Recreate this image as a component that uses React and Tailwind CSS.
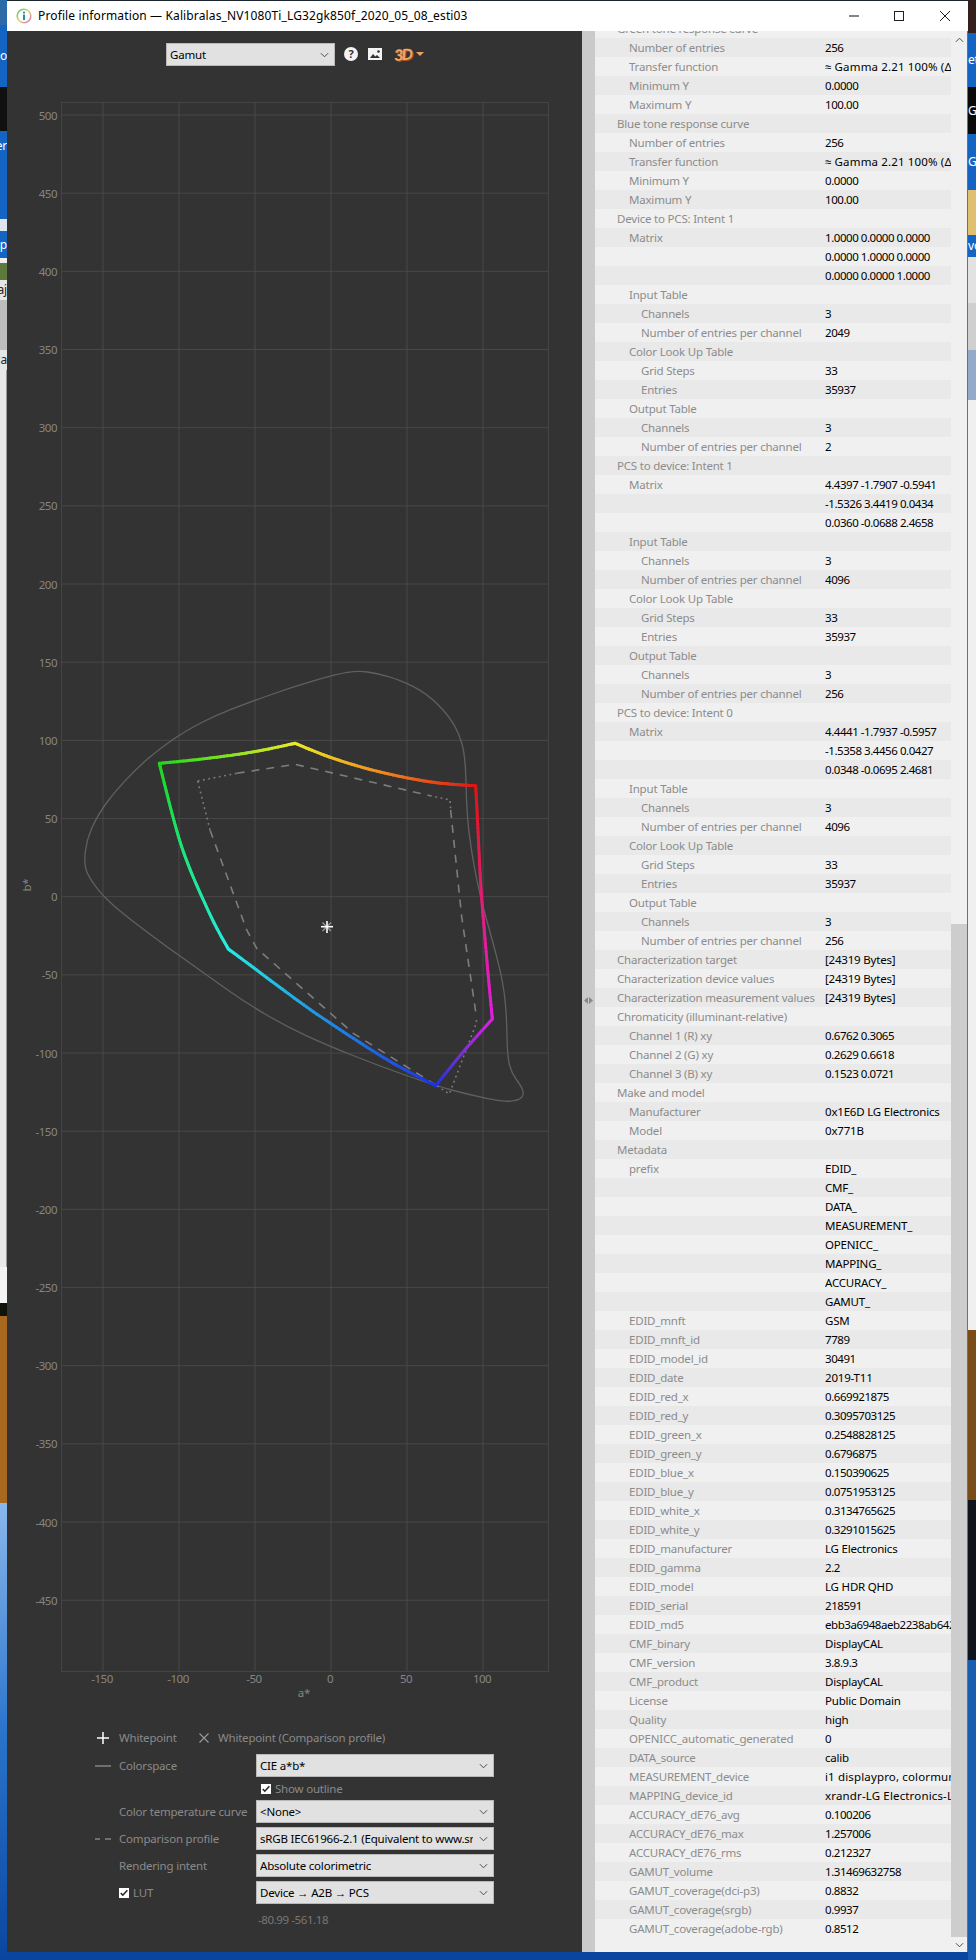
import React from "react";

const L = (d, l, v = "") => [d, l, v];
const sub = (n) => [
  L(2, "Channels", "3"),
  L(2, "Number of entries per channel", n),
];
const lut = (a, b) => [
  L(1, "Input Table"),
  ...sub(a),
  L(1, "Color Look Up Table"),
  L(2, "Grid Steps", "33"),
  L(2, "Entries", "35937"),
  L(1, "Output Table"),
  ...sub(b),
];
const trc = [
  L(1, "Number of entries", "256"),
  L(1, "Transfer function", "≈ Gamma 2.21 100% (Δ"),
  L(1, "Minimum Y", "0.0000"),
  L(1, "Maximum Y", "100.00"),
];
const rows = [
  L(0, "Green tone response curve"),
  ...trc,
  L(0, "Blue tone response curve"),
  ...trc,
  L(0, "Device to PCS: Intent 1"),
  L(1, "Matrix", "1.0000 0.0000 0.0000"),
  L(1, "", "0.0000 1.0000 0.0000"),
  L(1, "", "0.0000 0.0000 1.0000"),
  ...lut("2049", "2"),
  L(0, "PCS to device: Intent 1"),
  L(1, "Matrix", "4.4397 -1.7907 -0.5941"),
  L(1, "", "-1.5326 3.4419 0.0434"),
  L(1, "", "0.0360 -0.0688 2.4658"),
  ...lut("4096", "256"),
  L(0, "PCS to device: Intent 0"),
  L(1, "Matrix", "4.4441 -1.7937 -0.5957"),
  L(1, "", "-1.5358 3.4456 0.0427"),
  L(1, "", "0.0348 -0.0695 2.4681"),
  ...lut("4096", "256"),
  L(0, "Characterization target", "[24319 Bytes]"),
  L(0, "Characterization device values", "[24319 Bytes]"),
  L(0, "Characterization measurement values", "[24319 Bytes]"),
  L(0, "Chromaticity (illuminant-relative)"),
  L(1, "Channel 1 (R) xy", "0.6762 0.3065"),
  L(1, "Channel 2 (G) xy", "0.2629 0.6618"),
  L(1, "Channel 3 (B) xy", "0.1523 0.0721"),
  L(0, "Make and model"),
  L(1, "Manufacturer", "0x1E6D LG Electronics"),
  L(1, "Model", "0x771B"),
  L(0, "Metadata"),
  L(1, "prefix", "EDID_"),
  L(1, "", "CMF_"),
  L(1, "", "DATA_"),
  L(1, "", "MEASUREMENT_"),
  L(1, "", "OPENICC_"),
  L(1, "", "MAPPING_"),
  L(1, "", "ACCURACY_"),
  L(1, "", "GAMUT_"),
  L(1, "EDID_mnft", "GSM"),
  L(1, "EDID_mnft_id", "7789"),
  L(1, "EDID_model_id", "30491"),
  L(1, "EDID_date", "2019-T11"),
  L(1, "EDID_red_x", "0.669921875"),
  L(1, "EDID_red_y", "0.3095703125"),
  L(1, "EDID_green_x", "0.2548828125"),
  L(1, "EDID_green_y", "0.6796875"),
  L(1, "EDID_blue_x", "0.150390625"),
  L(1, "EDID_blue_y", "0.0751953125"),
  L(1, "EDID_white_x", "0.3134765625"),
  L(1, "EDID_white_y", "0.3291015625"),
  L(1, "EDID_manufacturer", "LG Electronics"),
  L(1, "EDID_gamma", "2.2"),
  L(1, "EDID_model", "LG HDR QHD"),
  L(1, "EDID_serial", "218591"),
  L(1, "EDID_md5", "ebb3a6948aeb2238ab642a1b9c0d"),
  L(1, "CMF_binary", "DisplayCAL"),
  L(1, "CMF_version", "3.8.9.3"),
  L(1, "CMF_product", "DisplayCAL"),
  L(1, "License", "Public Domain"),
  L(1, "Quality", "high"),
  L(1, "OPENICC_automatic_generated", "0"),
  L(1, "DATA_source", "calib"),
  L(1, "MEASUREMENT_device", "i1 displaypro, colormunki display"),
  L(1, "MAPPING_device_id", "xrandr-LG Electronics-LG HDR QHD"),
  L(1, "ACCURACY_dE76_avg", "0.100206"),
  L(1, "ACCURACY_dE76_max", "1.257006"),
  L(1, "ACCURACY_dE76_rms", "0.212327"),
  L(1, "GAMUT_volume", "1.31469632758"),
  L(1, "GAMUT_coverage(dci-p3)", "0.8832"),
  L(1, "GAMUT_coverage(srgb)", "0.9937"),
  L(1, "GAMUT_coverage(adobe-rgb)", "0.8512"),
];

// zoom-crop coordinates to page coordinates
const P = ([x, y]) => [60 + x / 3, 650 + y / 3];

const outline = [
  [895,62],[830,72],[700,110],[560,160],[470,195],[380,240],[300,295],[230,355],[160,430],[110,500],[80,570],[72,640],[85,680],[130,740],[200,800],[320,890],[440,975],[560,1060],[680,1130],[800,1185],[950,1245],[1120,1305],[1230,1335],[1330,1355],[1375,1352],[1392,1335],[1385,1310],[1355,1270],[1342,1220],[1340,1100],[1330,1000],[1300,880],[1260,740],[1235,610],[1220,490],[1217,340],[1205,270],[1170,200],[1100,130],[1020,90],[950,70],
].map(P);

const smoothClosed = (pts) => {
  const n = pts.length;
  const mid = (a, b) => [(a[0] + b[0]) / 2, (a[1] + b[1]) / 2];
  const s = mid(pts[n - 1], pts[0]);
  let d = `M${s[0]} ${s[1]}`;
  pts.forEach((p, i) => {
    const m = mid(p, pts[(i + 1) % n]);
    d += `Q${p[0]} ${p[1]} ${m[0]} ${m[1]}`;
  });
  return d + "Z";
};

const sections = [
  { pts: [[298,340],[400,330],[520,315],[610,300],[705,280]], cols: [[30,215,30],[235,235,40]] },
  { pts: [[705,280],[800,318],[900,350],[1000,375],[1100,394],[1180,403],[1247,407]], cols: [[235,235,40],[240,135,30],[225,20,20]] },
  { pts: [[1247,407],[1253,520],[1262,700],[1272,830],[1285,980],[1297,1107]], cols: [[225,20,20],[225,30,120],[225,30,225]] },
  { pts: [[1297,1107],[1210,1205],[1127,1307]], cols: [[225,30,225],[120,50,210],[30,50,225]] },
  { pts: [[1127,1307],[1000,1240],[880,1165],[760,1085],[650,1005],[570,945],[505,897]], cols: [[30,50,225],[30,140,230],[40,235,225]] },
  { pts: [[505,897],[468,830],[430,750],[395,670],[365,590],[340,505],[318,420],[298,340]], cols: [[40,235,225],[30,230,130],[30,215,30]] },
];

const colorAt = (cols, t) => {
  const f = Math.min(t, 1) * (cols.length - 1);
  const i = Math.min(Math.floor(f), cols.length - 2);
  const u = f - i;
  const c = cols[i].map((v, k) => Math.round(v + (cols[i + 1][k] - v) * u));
  return `rgb(${c.join(",")})`;
};

// Catmull-Rom resampling so the gamut edges are smooth curves
const dense = (raw) => {
  const out = [];
  for (let i = 0; i < raw.length - 1; i++) {
    const p0 = raw[Math.max(i - 1, 0)];
    const p1 = raw[i];
    const p2 = raw[i + 1];
    const p3 = raw[Math.min(i + 2, raw.length - 1)];
    for (let k = 0; k < 12; k++) {
      const t = k / 12;
      const c = (a, b, d, e) =>
        0.5 * (2 * b + (d - a) * t + (2 * a - 5 * b + 4 * d - e) * t * t + (3 * b - a - 3 * d + e) * t * t * t);
      out.push([c(p0[0], p1[0], p2[0], p3[0]), c(p0[1], p1[1], p2[1], p3[1])]);
    }
  }
  out.push(raw[raw.length - 1]);
  return out;
};

const GamutLine = () => {
  const segs = [];
  sections.forEach((sec, si) => {
    const pts = dense(sec.pts.map(P));
    let total = 0;
    for (let i = 1; i < pts.length; i++) total += Math.hypot(pts[i][0] - pts[i - 1][0], pts[i][1] - pts[i - 1][1]);
    let done = 0;
    for (let i = 1; i < pts.length; i++) {
      const [a, b] = [pts[i - 1], pts[i]];
      segs.push(
        <line
          key={`${si}-${i}`}
          x1={a[0]}
          y1={a[1]}
          x2={b[0]}
          y2={b[1]}
          stroke={colorAt(sec.cols, done / total)}
          strokeWidth="3"
          strokeLinecap="round"
        />
      );
      done += Math.hypot(b[0] - a[0], b[1] - a[1]);
    }
  });
  return <g>{segs}</g>;
};

const poly = (pts) => pts.map(P).map((p) => p.join(",")).join(" ");

const yTicks = [];
for (let v = 500; v >= -450; v -= 50) yTicks.push(v);
const xTicks = [-150, -100, -50, 0, 50, 100];
const yPos = (v) => 896.7 - v * 1.5634;
const xPos = (v) => 331 + v * 1.52;

const Chart = () => (
  <svg viewBox="7 90 575 1610" className="block w-[575px] h-[1610px] shrink-0">
    <rect x="61.5" y="102.5" width="487" height="1569" fill="none" stroke="#444444" />
    {yTicks.map((v) => (
      <line key={v} x1="61" x2="548" y1={yPos(v)} y2={yPos(v)} stroke="#484848" />
    ))}
    {xTicks.map((v) => (
      <line key={v} x1={xPos(v)} x2={xPos(v)} y1="102" y2="1671" stroke="#484848" />
    ))}
    {yTicks.map((v) => (
      <text key={v} x="57" y={yPos(v) + 4.5} textAnchor="end" fontSize="11.5" letterSpacing="-0.5" fill="#858585">{v}</text>
    ))}
    {xTicks.map((v) => (
      <text key={v} x={xPos(v) - 1} y="1683" textAnchor="middle" fontSize="11.5" letterSpacing="-0.5" fill="#858585">{v}</text>
    ))}
    <text x="304" y="1697" textAnchor="middle" fontSize="11.5" fill="#858585">a*</text>
    <text x="31" y="885" textAnchor="middle" fontSize="11.5" fill="#858585" transform="rotate(-90 31 885)">b*</text>

    <path d={smoothClosed(outline)} fill="none" stroke="#606060" strokeWidth="1.3" />

    <g fill="none" stroke="#7d7d7d" strokeWidth="1.6">
      <polyline points={poly([[413,393],[530,370]])} strokeDasharray="1.8 3.6" />
      <polyline points={poly([[530,370],[705,343],[1110,437]])} strokeDasharray="8 7" />
      <polyline points={poly([[1110,437],[1170,450],[1172,480]])} strokeDasharray="1.8 3.6" />
      <polyline points={poly([[1172,480],[1205,800],[1250,1105]])} strokeDasharray="8 7" />
      <polyline points={poly([[1250,1110],[1245,1130],[1168,1332],[1127,1305]])} strokeDasharray="1.8 3.6" />
      <polyline points={poly([[1127,1305],[880,1150],[590,895],[560,840],[450,540]])} strokeDasharray="8 7" />
      <polyline points={poly([[450,540],[413,393]])} strokeDasharray="1.8 3.6" />
    </g>

    <GamutLine />

    <g stroke="#9a9a9a" strokeWidth="1.2">
      <line x1="322.5" y1="922.5" x2="331" y2="931" />
      <line x1="331" y1="922.5" x2="322.5" y2="931" />
    </g>
    <g stroke="#ffffff" strokeWidth="1.6">
      <line x1="321" x2="333" y1="926.7" y2="926.7" />
      <line x1="327" x2="327" y1="921" y2="933" />
    </g>
  </svg>
);

const Chevron = ({ className = "" }) => (
  <svg viewBox="0 0 10 6" className={`w-[9px] h-[6px] shrink-0 ${className}`}>
    <path d="M1 1l4 4 4-4" fill="none" stroke="#4a4a4a" strokeWidth="1.1" />
  </svg>
);

const Select = ({ text, className = "" }) => (
  <div className={`flex items-center h-[23px] bg-[#e1e1e1] border border-[#b9b9b9] pl-[3px] pr-[5px] text-black ${className}`}>
    <span className="flex-1 overflow-hidden whitespace-nowrap mr-[6px]">{text}</span>
    <Chevron />
  </div>
);

const Check = () => (
  <span className="flex items-center justify-center w-[10px] h-[10px] bg-white shrink-0">
    <svg viewBox="0 0 10 10" className="w-[10px] h-[10px]">
      <path d="M1.8 5l2 2.2L8.4 2.2" fill="none" stroke="#222222" strokeWidth="1.5" />
    </svg>
  </span>
);

const Row = ({ marker, label, children }) => (
  <div className="flex items-center h-[23px]">
    <span className="flex items-center justify-center w-[24px] mr-[4px] shrink-0">{marker}</span>
    <span className="w-[137px] shrink-0 whitespace-nowrap">{label}</span>
    {children}
  </div>
);

const Legend = () => (
  <div className="flex flex-col pl-[84px] text-[#8a8a8a]">
    <div className="flex items-center h-[18px] mt-[29px]">
      <span className="flex items-center justify-center w-[24px] mr-[4px] shrink-0">
        <svg viewBox="0 0 12 12" className="w-[12px] h-[12px]">
          <path d="M6 0v12M0 6h12" stroke="#ffffff" strokeWidth="1.5" />
        </svg>
      </span>
      <span className="whitespace-nowrap w-[59px]">Whitepoint</span>
      <svg viewBox="0 0 10 10" className="w-[10px] h-[10px] ml-[21px]">
        <path d="M.5.5l9 9M9.5.5l-9 9" stroke="#9a9a9a" strokeWidth="1.1" />
      </svg>
      <span className="ml-[9px] whitespace-nowrap">Whitepoint (Comparison profile)</span>
    </div>
    <div className="mt-[7px]">
      <Row
        marker={<span className="block w-[16px] h-[2px] bg-[#6f6f6f]" />}
        label="Colorspace"
      >
        <Select text="CIE a*b*" className="w-[238px]" />
      </Row>
    </div>
    <div className="flex items-center h-[23px] pl-[170px]">
      <Check />
      <span className="ml-[4px]">Show outline</span>
    </div>
    <Row label="Color temperature curve">
      <Select text="<None>" className="w-[238px]" />
    </Row>
    <div className="mt-[4px]">
      <Row
        marker={
          <span className="flex gap-[5px]">
            <span className="block w-[5px] h-[2px] bg-[#6f6f6f]" />
            <span className="block w-[6px] h-[2px] bg-[#6f6f6f]" />
          </span>
        }
        label="Comparison profile"
      >
        <Select text="sRGB IEC61966-2.1 (Equivalent to www.srgb.com)" className="w-[238px]" />
      </Row>
    </div>
    <div className="mt-[4px]">
      <Row label="Rendering intent">
        <Select text="Absolute colorimetric" className="w-[238px]" />
      </Row>
    </div>
    <div className="mt-[4px] flex items-center h-[23px]">
      <span className="w-[28px] shrink-0" />
      <span className="flex items-center w-[137px] shrink-0">
        <Check />
        <span className="ml-[4px]">LUT</span>
      </span>
      <Select text="Device → A2B → PCS" className="w-[238px]" />
    </div>
    <div className="mt-[6px] pl-[167px] h-[19px] leading-[19px] text-[#777777] tracking-[-0.4px]">-80.99 -561.18</div>
  </div>
);

const Toolbar = () => (
  <div className="flex items-start h-[59px] pt-[12px] pl-[159px] shrink-0">
    <Select text="Gamut" className="w-[169px]" />
    <svg viewBox="0 0 14 14" className="w-[14px] h-[14px] ml-[9px] mt-[4px] shrink-0">
      <circle cx="7" cy="7" r="7" fill="#f4f4f4" />
      <text x="7" y="11" textAnchor="middle" fontSize="11" fontWeight="700" fill="#333333">?</text>
    </svg>
    <svg viewBox="0 0 14 12" className="w-[14px] h-[12px] ml-[10px] mt-[5px] shrink-0">
      <rect width="14" height="12" fill="#f4f4f4" />
      <path d="M2 10l3-4 2.4 2.6L9 7l3 3z" fill="#333333" />
      <circle cx="10.5" cy="3.5" r="1.3" fill="#333333" />
    </svg>
    <span className="ml-[12px] mt-[2px] w-[20px] text-[16px] leading-[19px] font-bold italic text-[#f0a468] font-['Liberation_Sans',sans-serif] tracking-[-1.5px] -rotate-6 [text-shadow:1px_1px_0_#a8521c]">3D</span>
    <svg viewBox="0 0 8 4" className="w-[8px] h-[4px] ml-[2px] mt-[9px] shrink-0">
      <path d="M0 0h8L4 4z" fill="#eda35c" />
    </svg>
  </div>
);

const InfoIcon = () => (
  <svg viewBox="0 0 16 16" className="w-[16px] h-[16px] shrink-0">
    <defs>
      <linearGradient id="ring" x1="0" y1="0" x2="1" y2="1">
        <stop offset="0" stopColor="#4fc07a" />
        <stop offset="0.5" stopColor="#e8d76a" />
        <stop offset="1" stopColor="#d06fc8" />
      </linearGradient>
    </defs>
    <circle cx="8" cy="8" r="6.8" fill="#fdfdfd" stroke="url(#ring)" strokeWidth="1.6" />
    <circle cx="8" cy="4.6" r="1.1" fill="#2a8aa8" />
    <rect x="7" y="6.6" width="2" height="5.4" fill="#2a8aa8" />
  </svg>
);

const TitleBar = () => (
  <div className="flex items-center h-[30px] bg-white text-black shrink-0 text-[12px] tracking-[0.13px]">
    <span className="ml-[9px] mr-[6px]"><InfoIcon /></span>
    <span className="flex-1 whitespace-nowrap">Profile information — Kalibralas_NV1080Ti_LG32gk850f_2020_05_08_esti03</span>
    <svg viewBox="0 0 10 10" className="w-[10px] h-[10px] mr-[35px]">
      <path d="M0 5h10" stroke="#222222" strokeWidth="1.1" />
    </svg>
    <svg viewBox="0 0 10 10" className="w-[10px] h-[10px] mr-[36px]">
      <rect x=".5" y=".5" width="9" height="9" fill="none" stroke="#222222" strokeWidth="1" />
    </svg>
    <svg viewBox="0 0 10 10" className="w-[10px] h-[10px] mr-[18px]">
      <path d="M0 0l10 10M10 0L0 10" stroke="#222222" strokeWidth="1" />
    </svg>
  </div>
);

const valueTracking = (v) => {
  if (/^[-\d. ]+$/.test(v) || v.startsWith("ebb3")) return "tracking-[-0.45px]";
  if (/^(≈|i1 |xrandr)/.test(v)) return "tracking-[0.15px]";
  return "";
};

const InfoList = () => (
  <div className="flex-1 overflow-hidden bg-[#f0f0f0]">
    <div className="-mt-[12px]">
      {rows.map(([d, label, value], i) => {
        const pad = d === 0 ? "pl-[22px]" : d === 1 ? "pl-[34px]" : "pl-[46px]";
        return (
          <div key={i} className={`flex h-[19px] leading-[19px] ${i % 2 ? "bg-[#e9e9e9]" : "bg-[#f0f0f0]"}`}>
            <span className={`w-[230px] shrink-0 whitespace-nowrap overflow-hidden text-[#8c8c8c] ${pad}`}>{label}</span>
            <span className={`flex-1 whitespace-nowrap overflow-hidden text-black ${valueTracking(value)}`}>{value}</span>
          </div>
        );
      })}
    </div>
  </div>
);

const ScrollBar = () => (
  <div className="flex flex-col w-[17px] bg-[#f0f0f0] border-r border-[#707070] shrink-0">
    <div className="flex items-center justify-center h-[17px]">
      <Chevron className="rotate-180" />
    </div>
    <div className="h-[876px]" />
    <div className="flex-1 bg-[#cdcdcd]" />
    <div className="flex items-center justify-center h-[15px]">
      <Chevron />
    </div>
  </div>
);

const Sash = () => (
  <div className="flex items-center justify-center w-[13px] bg-[#cacaca] shrink-0">
    <svg viewBox="0 0 9 7" className="w-[9px] h-[7px] mt-[18px]">
      <path d="M4 0v7L0 3.5zM5 0v7l4-3.5z" fill="#8a8a8a" />
    </svg>
  </div>
);

const Strip = ({ h, className = "", text, white }) => (
  <div
    style={{ height: h }}
    className={`flex items-center overflow-hidden whitespace-nowrap ${white ? "text-white" : "text-[#222222]"} ${className}`}
  >
    {text}
  </div>
);

const LeftStrip = () => (
  <div className="flex flex-col w-[7px] shrink-0 text-[12px]">
    <Strip h={25} className="bg-[#2c6aa8]" />
    <Strip h={62} className="bg-[#1464c4] justify-end" text="Lo" white />
    <Strip h={44} className="bg-[#101010]" />
    <Strip h={30} className="bg-[#1464c4] justify-end" text="er" white />
    <Strip h={58} className="bg-[#1464c4]" />
    <Strip h={12} className="bg-[#dfe6f2]" />
    <Strip h={27} className="bg-[#1464c4] justify-end" text="sp" white />
    <Strip h={5} className="bg-[#eeeeee]" />
    <Strip h={17} className="bg-[#5d7a3c]" />
    <Strip h={20} className="bg-[#e6e6e6] justify-end" text="aj" />
    <Strip h={50} className="bg-[#bdbdbd]" />
    <Strip h={20} className="bg-[#e6e6e6] justify-end" text="ela" />
    <Strip h={897} className="bg-[#e9e9e9] border-r border-[#9a9a9a]" />
    <Strip h={36} className="bg-[#f4f4f4]" />
    <Strip h={13} className="bg-[#0f1408]" />
    <Strip h={187} className="bg-[#a8681e]" />
    <div className="flex-1 bg-gradient-to-b from-[#8ab8ec] via-[#2a74cc] to-[#0a46a0]" />
  </div>
);

const RightStrip = () => (
  <div className="flex flex-col w-[8px] shrink-0 text-[12px]">
    <Strip h={33} className="bg-[#33201c]" />
    <Strip h={54} className="bg-[#1464c4]" text="et" white />
    <Strip h={47} className="bg-[#0a0a0a]" text="G" white />
    <Strip h={56} className="bg-[#1464c4]" text="GV" white />
    <Strip h={45} className="bg-[#e0c070]" />
    <Strip h={22} className="bg-[#1464c4]" text="vo" white />
    <Strip h={46} className="bg-[#e2e2e2]" />
    <Strip h={47} className="bg-[#cfcfcf]" />
    <Strip h={50} className="bg-[#94aaca]" />
    <Strip h={930} className="bg-[#f0f0f0]" />
    <Strip h={170} className="bg-[#7a4c18]" />
    <Strip h={160} className="bg-[#10141c]" />
    <div className="flex-1 bg-[#1a5cb0]" />
  </div>
);

export default function App() {
  return (
    <div className="flex w-[976px] h-[1960px] overflow-hidden bg-[#0a46a0] font-['Noto_Sans',sans-serif] text-[11.5px] tracking-[-0.2px]">
      <LeftStrip />
      <div className="flex flex-col w-[961px] h-[1952px] pt-px bg-[#1a2530] shrink-0">
        <TitleBar />
        <div className="flex flex-1 min-h-0">
          <div className="flex flex-col w-[575px] bg-[#333333] shrink-0">
            <Toolbar />
            <Chart />
            <Legend />
          </div>
          <Sash />
          <InfoList />
          <ScrollBar />
        </div>
      </div>
      <RightStrip />
    </div>
  );
}
